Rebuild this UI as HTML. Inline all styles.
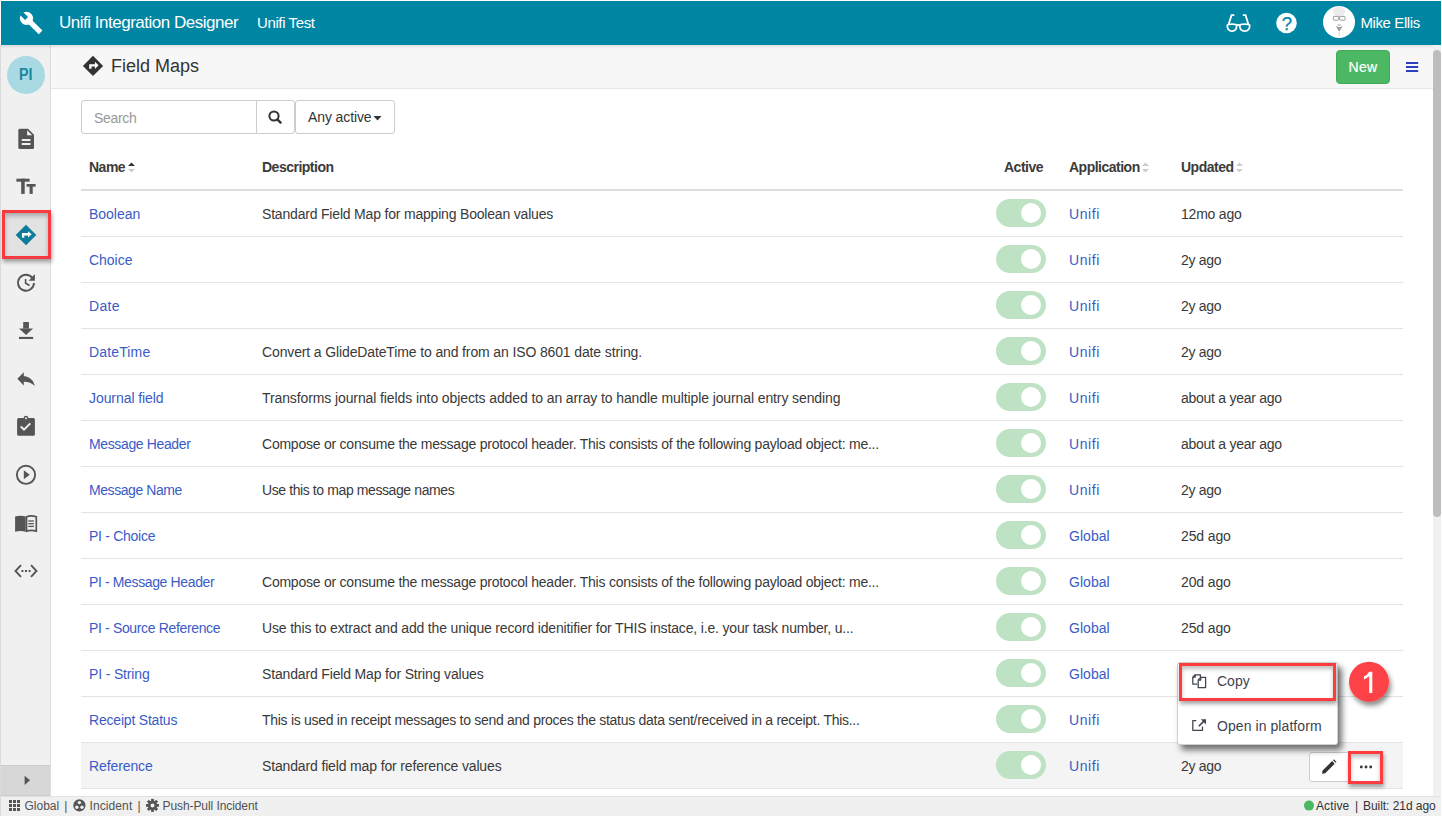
<!DOCTYPE html>
<html><head><meta charset="utf-8">
<style>
*{box-sizing:border-box;margin:0;padding:0}
html,body{width:1442px;height:817px;overflow:hidden;background:#fff;font-family:"Liberation Sans",sans-serif;color:#333}
.abs{position:absolute}
#hdr{left:1px;top:1px;width:1440px;height:44px;background:#0085a3;color:#fff}
#side{left:1px;top:45px;width:50px;height:751px;background:#f0f0f0;border-right:1px solid #dcdcdc}
#pbar{left:51px;top:45px;width:1382px;height:44px;background:#f7f7f7;border-bottom:1px solid #e6e6e6}
#track{left:1433px;top:45px;width:8px;height:751px;background:#f1f1f1}
#thumb{left:1433px;top:50px;width:8px;height:467px;background:#bdbdbd;border-radius:4px}
#foot{left:1px;top:796px;width:1440px;height:20px;background:#f0f0f0;border-top:1px solid #e2e2e2;font-size:12.5px;color:#444}
.row{position:absolute;left:81px;width:1322px;height:46px;border-bottom:1px solid #e3e3e3}
.row.hl{background:#f4f4f4}
.cell{position:absolute;top:1px;line-height:45px;font-size:14px;white-space:nowrap;letter-spacing:-0.2px}
.c1{left:8px;color:#3a5bc7}
.c2{left:181px;color:#393939}
.c4{left:988px;color:#3a5bc7}
.c5{left:1100px;color:#393939}
.tog{position:absolute;left:915px;top:8px;width:50px;height:28px;border-radius:14px;background:#bde3c4}
.tog:after{content:"";position:absolute;left:25px;top:4px;width:20px;height:20px;border-radius:50%;background:#fff}
.th{position:absolute;top:0;line-height:44px;font-size:14px;font-weight:bold;color:#3b3b3b;white-space:nowrap;letter-spacing:-0.5px}
.txt{position:absolute;white-space:nowrap;line-height:1}
</style></head><body>
<div id="hdr" class="abs"></div>
<div id="side" class="abs"></div>
<div id="pbar" class="abs"></div>
<div id="track" class="abs"></div>
<div id="thumb" class="abs"></div>
<div id="foot" class="abs"></div>
<div class="abs" style="left:0;top:45px;width:1px;height:771px;background:#dadada"></div>
<div class="abs" style="left:1px;top:45px;width:1432px;height:4px;background:linear-gradient(rgba(0,0,0,.09),rgba(0,0,0,0))"></div>

<!-- header text -->
<div class="txt" style="left:59px;top:14px;font-size:17px;color:#fff;letter-spacing:-0.49px">Unifi Integration Designer</div>
<div class="txt" style="left:257px;top:15px;font-size:15px;color:#fff;letter-spacing:-0.38px">Unifi Test</div>
<div class="txt" style="left:1360.5px;top:15px;font-size:15px;color:#fff;letter-spacing:-0.41px">Mike Ellis</div>

<!-- page bar -->
<div class="txt" style="left:111px;top:57px;font-size:18px;color:#333">Field Maps</div>
<div class="abs" style="left:1336px;top:50px;width:54px;height:34px;background:#4cb863;border:1px solid #40ab56;border-radius:4px;color:#fff;font-size:14px;line-height:32px;text-align:center;letter-spacing:0.3px;-webkit-text-stroke:0.2px #fff">New</div>

<!-- search -->
<div class="abs" style="left:81px;top:100px;width:176px;height:34px;border:1px solid #ccc;border-radius:3px 0 0 3px;background:#fff"></div>
<div class="txt" style="left:94px;top:111px;font-size:14px;color:#999;letter-spacing:-0.3px">Search</div>
<div class="abs" style="left:256px;top:100px;width:39px;height:34px;border:1px solid #ccc;border-radius:0 3px 3px 0;background:#fff"></div>
<div class="abs" style="left:295px;top:100px;width:100px;height:34px;border:1px solid #ccc;border-radius:3px;background:#fff"></div>
<div class="txt" style="left:308px;top:110px;font-size:14px;color:#333;letter-spacing:-0.11px">Any active</div>

<!-- table header -->
<div class="abs" style="left:81px;top:145px;width:1322px;height:46px;border-bottom:2px solid #ddd">
  <div class="th" style="left:8px">Name</div>
  <div class="th" style="left:181px">Description</div>
  <div class="th" style="left:923px">Active</div>
  <div class="th" style="left:988px">Application</div>
  <div class="th" style="left:1100px">Updated</div>
</div>
<div class="row" style="top:191px"><div class="cell c1" style="letter-spacing:-0.03px">Boolean</div><div class="cell c2" style="letter-spacing:-0.19px">Standard Field Map for mapping Boolean values</div><div class="tog"></div><div class="cell c4" style="letter-spacing:0.6px">Unifi</div><div class="cell c5" style="letter-spacing:-0.21px">12mo ago</div></div>
<div class="row" style="top:237px"><div class="cell c1" style="letter-spacing:-0.02px">Choice</div><div class="tog"></div><div class="cell c4" style="letter-spacing:0.6px">Unifi</div><div class="cell c5" style="letter-spacing:-0.28px">2y ago</div></div>
<div class="row" style="top:283px"><div class="cell c1" style="letter-spacing:0.3px">Date</div><div class="tog"></div><div class="cell c4" style="letter-spacing:0.6px">Unifi</div><div class="cell c5" style="letter-spacing:-0.28px">2y ago</div></div>
<div class="row" style="top:329px"><div class="cell c1" style="letter-spacing:0.15px">DateTime</div><div class="cell c2" style="letter-spacing:-0.13px">Convert a GlideDateTime to and from an ISO 8601 date string.</div><div class="tog"></div><div class="cell c4" style="letter-spacing:0.6px">Unifi</div><div class="cell c5" style="letter-spacing:-0.28px">2y ago</div></div>
<div class="row" style="top:375px"><div class="cell c1" style="letter-spacing:-0.07px">Journal field</div><div class="cell c2" style="letter-spacing:-0.105px">Transforms journal fields into objects added to an array to handle multiple journal entry sending</div><div class="tog"></div><div class="cell c4" style="letter-spacing:0.6px">Unifi</div><div class="cell c5" style="letter-spacing:-0.27px">about a year ago</div></div>
<div class="row" style="top:421px"><div class="cell c1" style="letter-spacing:-0.37px">Message Header</div><div class="cell c2" style="letter-spacing:-0.233px">Compose or consume the message protocol header. This consists of the following payload object: me...</div><div class="tog"></div><div class="cell c4" style="letter-spacing:0.6px">Unifi</div><div class="cell c5" style="letter-spacing:-0.27px">about a year ago</div></div>
<div class="row" style="top:467px"><div class="cell c1" style="letter-spacing:-0.43px">Message Name</div><div class="cell c2" style="letter-spacing:-0.4px">Use this to map message names</div><div class="tog"></div><div class="cell c4" style="letter-spacing:0.6px">Unifi</div><div class="cell c5" style="letter-spacing:-0.28px">2y ago</div></div>
<div class="row" style="top:513px"><div class="cell c1" style="letter-spacing:-0.28px">PI - Choice</div><div class="tog"></div><div class="cell c4" style="letter-spacing:0.04px">Global</div><div class="cell c5" style="letter-spacing:-0.13px">25d ago</div></div>
<div class="row" style="top:559px"><div class="cell c1" style="letter-spacing:-0.37px">PI - Message Header</div><div class="cell c2" style="letter-spacing:-0.233px">Compose or consume the message protocol header. This consists of the following payload object: me...</div><div class="tog"></div><div class="cell c4" style="letter-spacing:0.04px">Global</div><div class="cell c5" style="letter-spacing:-0.13px">20d ago</div></div>
<div class="row" style="top:605px"><div class="cell c1" style="letter-spacing:-0.35px">PI - Source Reference</div><div class="cell c2" style="letter-spacing:-0.163px">Use this to extract and add the unique record idenitifier for THIS instace, i.e. your task number, u...</div><div class="tog"></div><div class="cell c4" style="letter-spacing:0.04px">Global</div><div class="cell c5" style="letter-spacing:-0.13px">25d ago</div></div>
<div class="row" style="top:651px"><div class="cell c1" style="letter-spacing:-0.15px">PI - String</div><div class="cell c2" style="letter-spacing:-0.157px">Standard Field Map for String values</div><div class="tog"></div><div class="cell c4" style="letter-spacing:0.04px">Global</div></div>
<div class="row" style="top:697px"><div class="cell c1" style="letter-spacing:-0.2px">Receipt Status</div><div class="cell c2" style="letter-spacing:-0.286px">This is used in receipt messages to send and proces the status data sent/received in a receipt. This...</div><div class="tog"></div><div class="cell c4" style="letter-spacing:0.6px">Unifi</div></div>
<div class="row hl" style="top:743px"><div class="cell c1" style="letter-spacing:-0.1px">Reference</div><div class="cell c2" style="letter-spacing:-0.145px">Standard field map for reference values</div><div class="tog"></div><div class="cell c4" style="letter-spacing:0.6px">Unifi</div><div class="cell c5" style="letter-spacing:-0.28px">2y ago</div></div>

<!-- row buttons -->
<div class="abs" style="left:1309px;top:752px;width:41px;height:30px;border:1px solid #ccc;border-radius:3px 0 0 3px;background:#fff"></div>
<div class="abs" style="left:1349px;top:752px;width:34px;height:30px;border:1px solid #ccc;border-radius:0 3px 3px 0;background:#fff"></div>

<div class="abs" style="left:1348px;top:751px;width:35px;height:33px;border:3px solid #fe3b3f;box-shadow:1px 3px 4px rgba(0,0,0,.35), inset 0 3px 4px rgba(0,0,0,.25);z-index:4"></div>
<div class="abs" style="left:2px;top:210px;width:49px;height:49px;border:3px solid #f73b3f;background:#e2e2e2;box-shadow:1px 3px 4px rgba(0,0,0,.35), inset 0 3px 4px rgba(0,0,0,.25);z-index:4"></div>
<svg class="abs" style="left:0;top:0;z-index:6" width="1442" height="817" viewBox="0 0 1442 817">
  <path d="M26,224.8 L36.3,235 L26,245.2 L15.7,235z" fill="#0b7d9a"/>
  <path d="M21.9,237.8 V233 H28 V231.2 L31.7,234.3 L28,237.5 V235.5 H24.3 V237.8 Z" fill="#fff"/>
  <g fill="#333"><circle cx="1361.3" cy="767" r="1.4"/><circle cx="1366" cy="767" r="1.4"/><circle cx="1370.7" cy="767" r="1.4"/></g>
</svg>
<!-- footer text -->
<div class="txt" style="left:24.5px;top:800px;font-size:12px;color:#505050">Global</div>
<div class="txt" style="left:64.2px;top:800px;font-size:12px;color:#505050">|</div>
<div class="txt" style="left:89.5px;top:800px;font-size:12px;color:#505050;letter-spacing:0.1px">Incident</div>
<div class="txt" style="left:137.4px;top:800px;font-size:12px;color:#505050">|</div>
<div class="txt" style="left:162.5px;top:800px;font-size:12px;color:#505050;letter-spacing:-0.08px">Push-Pull Incident</div>
<div class="txt" style="left:1316px;top:800px;font-size:12px;color:#333;letter-spacing:0.1px">Active</div>
<div class="txt" style="left:1355px;top:800px;font-size:12px;color:#333">|</div>
<div class="txt" style="left:1363px;top:800px;font-size:12px;color:#333;letter-spacing:-0.05px">Built: 21d ago</div>

<!-- popover -->
<div class="abs" style="left:1177px;top:662px;width:161px;height:83px;background:#fff;border-radius:3px;border:1px solid rgba(0,0,0,.18);box-shadow:4px 5px 6px rgba(0,0,0,.55)"></div>
<div class="abs" style="left:1179px;top:663px;width:157px;height:38px;border:3px solid #fe3b3f;box-shadow:1px 3px 4px rgba(0,0,0,.35), inset 0 3px 4px rgba(0,0,0,.25);z-index:4"></div>
<div class="txt" style="left:1217px;top:674px;font-size:14px;color:#3d4350">Copy</div>
<div class="txt" style="left:1217px;top:719px;font-size:14px;color:#3d4350;letter-spacing:0.07px">Open in platform</div>

<svg class="abs" style="left:0;top:0" width="1442" height="817" viewBox="0 0 1442 817">
  <!-- wrench -->
  <g transform="translate(16,8)" fill="#fff">
    <circle cx="10.5" cy="10.3" r="6.6"/>
    <line x1="10.5" y1="10.3" x2="24.6" y2="24.4" stroke="#fff" stroke-width="5.2"/>
    <line x1="2" y1="2" x2="10.6" y2="10.4" stroke="#0085a3" stroke-width="4.2"/>
  </g>
  <!-- glasses -->
  <g fill="none" stroke="#fff" stroke-width="1.8">
    <path d="M1227.3,25.6 q0,-1.5 4.7,-1.5 q4.7,0 4.7,1.5 q0,5.6 -4.7,5.6 q-4.7,0 -4.7,-5.6z"/>
    <path d="M1239.7,25.6 q0,-1.5 5,-1.5 q5,0 5,1.5 q0,5.6 -5,5.6 q-5,0 -5,-5.6z"/>
    <path d="M1236.7,25 h3"/>
    <path d="M1228.6,24.6 L1231.5,15.2 h2.8"/>
    <path d="M1248.4,24.6 L1245.6,15.2 h-2.8"/>
  </g>
  <!-- help -->
  <circle cx="1286.5" cy="23" r="10.3" fill="#fff"/>
  <text x="1287" y="29.8" font-size="18.5" fill="#0085a3" stroke="#0085a3" stroke-width="0.25" text-anchor="middle" font-family="Liberation Sans">?</text>
  <!-- avatar -->
  <circle cx="1339" cy="22" r="16" fill="#fff"/>
  <ellipse cx="1339.2" cy="11.5" rx="6" ry="5" fill="#ebebeb"/>
  <g fill="none" stroke="#8f8f8f" stroke-width="0.9">
    <rect x="1333.3" y="16.4" width="5.4" height="3.8" rx="0.8"/>
    <rect x="1339.7" y="16.4" width="5.4" height="3.8" rx="0.8"/>
  </g>
  <path d="M1338.7,17 h1" stroke="#8f8f8f" stroke-width="1"/>
  <path d="M1335.5,25.8 q3.7,2.6 7.4,0 l-3.7,6z" fill="#9d9d9d"/>
  <path d="M1337.6,24.2 h3.2 v1.6 h-3.2z" fill="#c4c4c4"/>
  <path d="M1339.2,32 v4" stroke="#e2e2e2" stroke-width="1.5"/>
  <!-- hamburger -->
  <g fill="#2b3fbf">
    <rect x="1406" y="62" width="12.2" height="2"/>
    <rect x="1406" y="66" width="12.2" height="2"/>
    <rect x="1406" y="70" width="12.2" height="2"/>
  </g>
  <!-- page bar diamond -->
  <path d="M93,55.8 L103.1,65.9 L93,76 L82.9,65.9z" fill="#333"/>
  <path d="M89.2,68.8 V64.2 H94.9 V61.7 L98.6,65.35 L94.9,69 V66.5 H91.5 V68.8 Z" fill="#fff"/>
  <!-- search icon -->
  <circle cx="274" cy="116" r="4.6" fill="none" stroke="#333" stroke-width="2"/>
  <line x1="277.3" y1="119.3" x2="280.6" y2="122.6" stroke="#333" stroke-width="2.4" stroke-linecap="round"/>
  <!-- caret -->
  <path d="M373.5,116 h8 l-4,4.5z" fill="#333"/>
  <!-- sort icons -->
  <path d="M128,166 h7 l-3.5,-3.6z" fill="#333"/>
  <path d="M128,169 h7 l-3.5,3.6z" fill="#ccc"/>
  <path d="M1142,166 h7 l-3.5,-3.6z" fill="#ccc"/>
  <path d="M1142,169 h7 l-3.5,3.6z" fill="#ccc"/>
  <path d="M1236,166 h7 l-3.5,-3.6z" fill="#ccc"/>
  <path d="M1236,169 h7 l-3.5,3.6z" fill="#ccc"/>

  <!-- sidebar avatar -->
  <circle cx="26" cy="75" r="19" fill="#a9d9e2"/>
  <text transform="translate(25.7,80.1) scale(0.84,1)" font-size="17" font-weight="bold" fill="#1a87a0" text-anchor="middle" font-family="Liberation Sans">PI</text>
  <g fill="#555">
    <!-- file -->
    <path d="M19.8,128.8 h8.2 l6,6 v12.6 q0,1.5 -1.5,1.5 h-12.7 q-1.5,0 -1.5,-1.5 v-17.1 q0,-1.5 1.5,-1.5z"/><path d="M27.1,130.2 v5.1 h5.1z" fill="#f4f4f4"/>
    <rect x="21.7" y="139" width="8.8" height="2" fill="#f0f0f0"/>
    <rect x="21.7" y="143" width="8.8" height="2" fill="#f0f0f0"/>
    <!-- Tt -->
    <rect x="16.4" y="178.7" width="13.2" height="3"/>
    <rect x="21.2" y="178.7" width="3.5" height="15.2"/>
    <rect x="26.6" y="184" width="9" height="2.7"/>
    <rect x="29.6" y="184" width="3.1" height="9.9"/>
    <!-- download -->
    <rect x="23.2" y="322" width="5.7" height="6.6"/>
    <path d="M19,328.4 h14.1 l-7.05,6.6z"/>
    <rect x="19" y="336.9" width="14.1" height="2.1"/>
    <!-- reply -->
    <path d="M23.8,376 v-3.8 l-6.5,6.6 l6.5,6.8 v-3.9 c4.7,0 8.4,1.6 11,4.2 c-1,-4.7 -4.4,-9.3 -11,-9.9z"/>
    <!-- clipboard -->
    <path d="M18.7,418 h5 a2.3,2.3 0 0 1 4.6,0 h5 q1.6,0 1.6,1.6 v14.6 q0,1.6 -1.6,1.6 h-14.6 q-1.6,0 -1.6,-1.6 v-14.6 q0,-1.6 1.6,-1.6z"/>
    <circle cx="26" cy="418.2" r="1" fill="#f0f0f0"/>
    <path d="M20.8,426.5 l3.2,3.2 l6.3,-6.3" fill="none" stroke="#f0f0f0" stroke-width="2"/>
    <!-- play -->
    <circle cx="26" cy="474.8" r="9.1" fill="none" stroke="#555" stroke-width="1.9"/>
    <path d="M23.8,470.3 l6,4.5 l-6,4.5z"/>
    <!-- book -->
    <path d="M15.1,516.6 q5.2,-1.6 10.6,0 v15.2 q-5.4,-1.4 -10.6,0z"/>
    <path d="M26.5,516.7 q4.8,-1.5 9.8,0 v14.4 q-4.9,-1.3 -9.8,0z" fill="none" stroke="#555" stroke-width="1.7"/>
    <g stroke="#555" stroke-width="1.3" fill="none">
      <path d="M28.3,521 h5.6"/><path d="M28.3,523.7 h5.6"/><path d="M28.3,526.4 h5.6"/>
    </g>
    <!-- code -->
    <path d="M21,565.2 l-5.5,5.8 l5.5,5.8" fill="none" stroke="#555" stroke-width="1.9"/>
    <path d="M31,565.2 l5.5,5.8 l-5.5,5.8" fill="none" stroke="#555" stroke-width="1.9"/>
    <rect x="21.4" y="570" width="2" height="2"/><rect x="25" y="570" width="2" height="2"/><rect x="28.6" y="570" width="2" height="2"/>
  </g>
  <!-- history -->
  <g fill="none" stroke="#555" stroke-width="1.9">
    <path d="M34,283 A8,8 0 1 1 32.4,277.9"/>
    <path d="M25.6,279 v4.3 l4,2.2" stroke-width="1.6"/>
  </g>
  <path d="M34.9,274.1 v6.7 h-6.3z" fill="#555"/>

  <!-- sidebar toggle bottom -->
  <rect x="1" y="765" width="49" height="31" fill="#d7d7d7"/>
  <rect x="1" y="765" width="49" height="1" fill="#cccccc"/>
  <rect x="1" y="795" width="49" height="1" fill="#cccccc"/>
  <path d="M24.6,775.7 l5.4,4.65 l-5.4,4.65z" fill="#555"/>

  <!-- selected sidebar item -->


  <!-- footer icons -->
  <g fill="#555">
    <rect x="9" y="800" width="3" height="3"/><rect x="13" y="800" width="3" height="3"/><rect x="17" y="800" width="3" height="3"/>
    <rect x="9" y="804" width="3" height="3"/><rect x="13" y="804" width="3" height="3"/><rect x="17" y="804" width="3" height="3"/>
    <rect x="9" y="808" width="3" height="3"/><rect x="13" y="808" width="3" height="3"/><rect x="17" y="808" width="3" height="3"/>
  </g>
  <circle cx="79.4" cy="805.4" r="6.1" fill="#555"/>
  <circle cx="79.4" cy="802.6" r="1.7" fill="#f0f0f0"/><circle cx="76.8" cy="807.2" r="1.7" fill="#f0f0f0"/><circle cx="82" cy="807.2" r="1.7" fill="#f0f0f0"/>
  <g transform="translate(152.5,805.4)">
    <circle r="4.6" fill="#555"/>
    <g fill="#555"><rect x="-1.4" y="-6.5" width="2.8" height="13"/><rect x="-1.4" y="-6.5" width="2.8" height="13" transform="rotate(45)"/><rect x="-1.4" y="-6.5" width="2.8" height="13" transform="rotate(90)"/><rect x="-1.4" y="-6.5" width="2.8" height="13" transform="rotate(135)"/></g>
    <circle r="2" fill="#f0f0f0"/>
  </g>
  <circle cx="1309" cy="805.6" r="5" fill="#4cb863"/>

  <!-- row buttons icons -->
  <path d="M1322,773.8 l0.6,-3.2 l9.5,-9.5 l2.6,2.6 l-9.5,9.5z M1333,760.2 l0.9,-0.9 l2.6,2.6 l-0.9,0.9z" fill="#333"/>

  <!-- red box around dots -->

</svg>

<!-- popover overlay svg (icons + red box + badge) -->
<svg class="abs" style="left:0;top:0;z-index:5" width="1442" height="817" viewBox="0 0 1442 817">
  <g fill="none" stroke="#3d4350" stroke-width="1.25" stroke-linejoin="round">
    <path d="M1197.4,684 h-4.6 v-6.8 l2.4,-2.4 h5.2 v2.6"/>
    <path d="M1192.8,677.2 h2.4 v-2.4"/>
    <path d="M1198.2,680 l2.6,-2.6 h4.8 v10.1 h-7.4z"/>
    <path d="M1198.2,680 h2.6 v-2.6"/>
    <path d="M1196.3,720.6 h-3.5 v9.7 h9.7 v-3.8"/>
    <path d="M1198.8,726.2 l5.6,-5.6" stroke-width="1.6"/>
  </g>
  <path d="M1200.8,719.3 h5.2 v5.2z" fill="#3d4350"/>
  <defs><filter id="ds" x="-30%" y="-30%" width="160%" height="160%"><feDropShadow dx="2" dy="4" stdDeviation="2.5" flood-color="#000" flood-opacity="0.45"/></filter></defs>
  <circle cx="1369" cy="681.8" r="20" fill="#fc4346" filter="url(#ds)"/>
  <path d="M1369.2,671.8 h3.1 v21.2 h-3.1 v-16.8 q-2.2,2 -5.3,3.3 v-2.9 q3.3,-1.6 5.3,-4.8z" fill="#fff"/>
</svg>
</body></html>
